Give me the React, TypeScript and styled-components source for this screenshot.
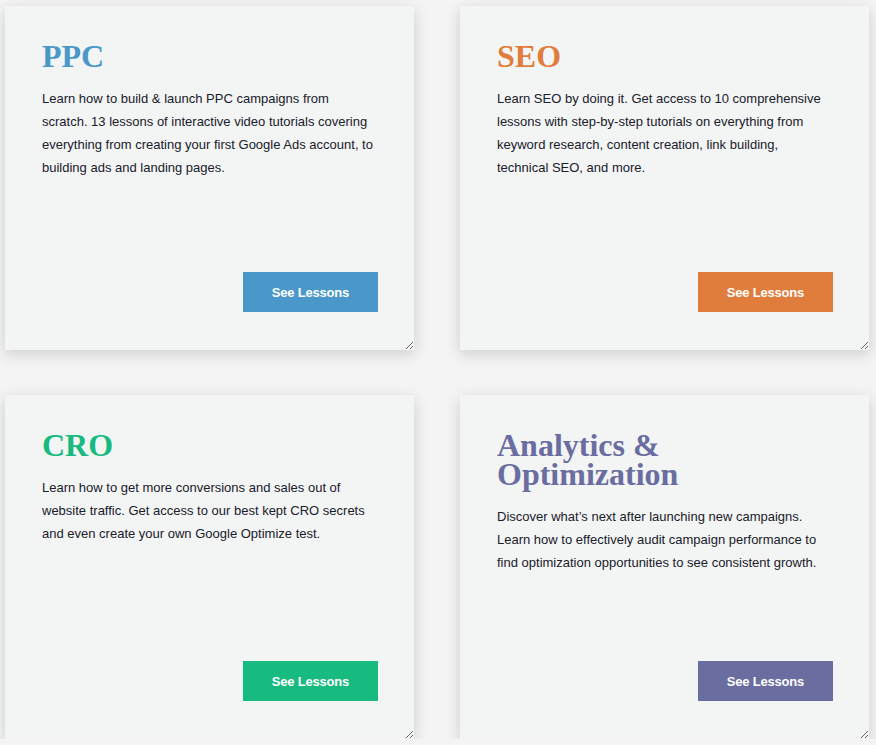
import styled, { createGlobalStyle } from "styled-components"

const GlobalStyle = createGlobalStyle`
  body {
    margin: 0;
    background: #f4f4f4;
    font-family: "Liberation Sans", Arial, sans-serif;
  }
`

interface Course {
  title: string
  text: string
  color: string
}

const courses: Course[] = [
  {
    title: "PPC",
    text: "Learn how to build & launch PPC campaigns from scratch. 13 lessons of interactive video tutorials covering everything from creating your first Google Ads account, to building ads and landing pages.",
    color: "#4a98c9",
  },
  {
    title: "SEO",
    text: "Learn SEO by doing it. Get access to 10 comprehensive lessons with step-by-step tutorials on everything from keyword research, content creation, link building, technical SEO, and more.",
    color: "#e07d3c",
  },
  {
    title: "CRO",
    text: "Learn how to get more conversions and sales out of website traffic. Get access to our best kept CRO secrets and even create your own Google Optimize test.",
    color: "#17ba7f",
  },
  {
    title: "Analytics & Optimization",
    text: "Discover what’s next after launching new campaigns. Learn how to effectively audit campaign performance to find optimization opportunities to see consistent growth.",
    color: "#6a6d9f",
  },
]

export default function App(): JSX.Element {
  return (
    <>
      <GlobalStyle />
      <Grid>
        {courses.map((c) => (
          <Card key={c.title}>
            <Title $color={c.color}>{c.title}</Title>
            <Text>{c.text}</Text>
            <Button $color={c.color}>See Lessons</Button>
          </Card>
        ))}
      </Grid>
    </>
  )
}

const Grid = styled.div`
  display: grid;
  grid-template-columns: 409px 409px;
  grid-auto-rows: 344px;
  column-gap: 46px;
  row-gap: 45px;
  padding: 6px 0 0 5px;
`

const Card = styled.div`
  display: flex;
  flex-direction: column;
  box-sizing: border-box;
  padding: 36px 36px 38px 37px;
  background: #f3f4f4;
  box-shadow: 0 4px 14px rgba(0, 0, 0, 0.16);
  resize: both;
  overflow: auto;
`

const Title = styled.h2<{ $color: string }>`
  margin: 0;
  font-family: "Liberation Serif", "Times New Roman", serif;
  font-weight: 700;
  font-size: 32px;
  line-height: 0.9;
  color: ${(p) => p.$color};
  max-width: 240px;
`

const Text = styled.p`
  margin: 16px 0 0;
  max-width: 333px;
  font-size: 13px;
  line-height: 23px;
  color: #18202a;
`

const Button = styled.a<{ $color: string }>`
  margin-top: auto;
  align-self: flex-end;
  width: 135px;
  height: 40px;
  display: flex;
  align-items: center;
  justify-content: center;
  background: ${(p) => p.$color};
  color: #fff;
  font-weight: 700;
  font-size: 13px;
  letter-spacing: -0.2px;
  cursor: pointer;
`
